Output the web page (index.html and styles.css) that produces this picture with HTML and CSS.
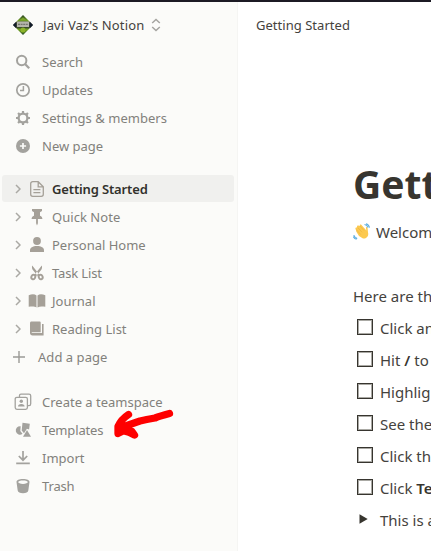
FILE: index.html
```html
<!DOCTYPE html>
<html lang="en">
<head>
<meta charset="utf-8">
<title>Getting Started</title>
<link rel="stylesheet" href="styles.css">
</head>
<body>
<div class="app">
  <aside class="sidebar">
    <div class="row switcher">
      <svg class="logo" width="20" height="20" viewBox="0 0 20 20"><defs><linearGradient id="g" x1="0" y1="0" x2="0" y2="1"><stop offset="0" stop-color="#263f23"/><stop offset=".28" stop-color="#719f23"/><stop offset=".4" stop-color="#393b35"/><stop offset=".6" stop-color="#303931"/><stop offset=".73" stop-color="#75a61d"/><stop offset="1" stop-color="#24482a"/></linearGradient></defs><path d="M10 0 20 10 10 20 0 10Z" fill="url(#g)"/><path d="M0 10 3 7v6ZM20 10l-3-3v6Z" fill="#111b29"/><path d="M4 6.500h12v5.500H4Z" fill="#b4b5aa"/><path d="M5 9.300h10" stroke="#66685f" stroke-width="1" stroke-dasharray="2 .6"/><circle cx="10" cy="15" r="2.500" fill="#8db42a"/><path d="m7 5 3-2.500L13 5Z" fill="#7da52c"/></svg>
      <span class="label name">Javi Vaz's Notion</span>
      <svg class="updown" width="10" height="14" viewBox="0 0 10 14"><path d="M1.200 5 5 1.500 8.800 5M1.200 9 5 12.500 8.800 9"/></svg>
    </div>
    <nav class="group tools">
      <div class="row"><svg class="icon" viewBox="0 0 16 16"><circle cx="6.700" cy="6.500" r="4.700" fill="none" stroke="currentColor" stroke-width="2"/><path d="m10 10 4.200 4.200" stroke="currentColor" stroke-width="2.300"/></svg><span class="label">Search</span></div>
      <div class="row"><svg class="icon" viewBox="0 0 16 16"><circle cx="8" cy="8" r="6.200" fill="none" stroke="currentColor" stroke-width="1.700"/><path d="M8.400 4v4.600H5" fill="none" stroke="currentColor" stroke-width="1.500"/></svg><span class="label">Updates</span></div>
      <div class="row"><svg class="icon" viewBox="0 0 16 16"><circle cx="8" cy="8" r="4.400" fill="none" stroke="currentColor" stroke-width="2.300"/><path d="M8 1v2.500M8 12.500V15M1 8h2.500M12.500 8H15M3.050 3.050 4.900 4.900M11.100 11.100l1.850 1.850M3.050 12.950 4.900 11.100M11.100 4.900l1.850-1.850" stroke="currentColor" stroke-width="2.200"/></svg><span class="label wide">Settings &amp; members</span></div>
      <div class="row"><svg class="icon" viewBox="0 0 16 16"><circle cx="8" cy="8" r="7" fill="currentColor"/><path d="M8 4.900v6.200M4.900 8h6.200" stroke="#fbfbf9" stroke-width="1.700"/></svg><span class="label">New page</span></div>
    </nav>
    <nav class="group pages">
      <div class="row active"><svg class="chev" viewBox="0 0 6 10"><path d="m1 1 4 4-4 4"/></svg><svg class="picon" viewBox="0 0 16 18"><path d="M9.200 1.700H3.700a2 2 0 0 0-2 2v10.600a2 2 0 0 0 2 2h8.600a2 2 0 0 0 2-2V6.700ZM9.200 1.900v4.900h4.900M4.400 9.700h7M4.400 12.600h7" fill="none" stroke="currentColor" stroke-width="1.300"/></svg><span class="label">Getting Started</span></div>
      <div class="row"><svg class="chev" viewBox="0 0 6 10"><path d="m1 1 4 4-4 4"/></svg><svg class="picon" viewBox="0 0 16 18"><path d="M3 1h10v2l-2 1.200v3.600c1.600.6 2.400 1.700 2.400 3.200H8.900v4.200L8 17.500l-.9-2.300V11H2.600c0-1.500.8-2.600 2.400-3.200V4.200L3 3Z" fill="currentColor"/></svg><span class="label wide">Quick Note</span></div>
      <div class="row"><svg class="chev" viewBox="0 0 6 10"><path d="m1 1 4 4-4 4"/></svg><svg class="picon" viewBox="0 0 16 18"><circle cx="8" cy="5" r="3.900" fill="currentColor"/><path d="M1 16v-1.700C1 11.600 3.700 10 8 10s7 1.600 7 4.300V16Z" fill="currentColor"/></svg><span class="label">Personal Home</span></div>
      <div class="row"><svg class="chev" viewBox="0 0 6 10"><path d="m1 1 4 4-4 4"/></svg><svg class="picon" viewBox="0 0 16 18"><path d="m3.200 1.500 7.700 9.800-1.700 1.200-4.900-5.900C3.100 5.100 2.600 3.300 3.200 1.500ZM12.800 1.500 5.100 11.300l1.700 1.200 4.900-5.900c1.200-1.500 1.700-3.300 1.100-5.100Z" fill="currentColor"/><g fill="none" stroke="currentColor" stroke-width="1.900"><ellipse cx="4.300" cy="13" rx="1.900" ry="2.300" transform="rotate(25 4.300 13)"/><ellipse cx="11.700" cy="13" rx="1.900" ry="2.300" transform="rotate(-25 11.700 13)"/></g></svg><span class="label tight">Task List</span></div>
      <div class="row"><svg class="chev" viewBox="0 0 6 10"><path d="m1 1 4 4-4 4"/></svg><svg class="picon" viewBox="0 0 16 18"><path d="M-.3 3.200C3 2 5.500 2 7.500 3.400V15.500c-2-1.300-4.500-1.300-7.800-.7ZM16.300 3.200C13 2 10.500 2 8.500 3.400V15.500c2-1.300 4.500-1.300 7.800-.7Z" fill="currentColor"/></svg><span class="label">Journal</span></div>
      <div class="row"><svg class="chev" viewBox="0 0 6 10"><path d="m1 1 4 4-4 4"/></svg><svg class="picon" viewBox="0 0 16 18"><path d="M2.500 1.500h8.200a1 1 0 0 1 1 1v9.800H3.300c-1 0-1 .8 0 .8H13V4h1.600v11.500H3.500C2 15.500 1 14.600 1 13V3c0-.9.600-1.500 1.500-1.500Z" fill="currentColor"/></svg><span class="label">Reading List</span></div>
      <div class="row add"><svg class="plus" viewBox="0 0 12 12"><path d="M6 0v12M0 6h12"/></svg><span class="label wide">Add a page</span></div>
    </nav>
    <nav class="group extras">
      <div class="row"><svg class="icon" viewBox="0 0 16 16"><g fill="none" stroke="currentColor" stroke-width="1.300"><path d="M4.500 3V1.600Q4.500.2 6 .2h8Q15.700.2 15.700 1.800v8Q15.700 11.700 14 11.700h-1.500"/><rect x=".2" y="3.300" width="12.200" height="12" rx="1.700"/></g><circle cx="6.300" cy="7.300" r="1.700" fill="currentColor"/><path d="M3 12.500q0-2.500 3.300-2.500t3.300 2.500Z" fill="currentColor"/></svg><span class="label">Create a teamspace</span></div>
      <div class="row templates"><svg class="icon" viewBox="0 0 16 16"><path d="m7.500.8 7.300 1-.7 5.700-2.200-.8L9 11.200 6.700 8.500Z" fill="currentColor"/><path d="M5.700 4.300a4.200 4.200 0 1 0 1.800 7.500L5.300 9Z" fill="currentColor"/><path d="m12 8 4 6.800H8Z" fill="currentColor"/></svg><span class="label tight">Templates</span>
        <svg class="arrow" width="62" height="36" viewBox="0 0 62 36"><path d="M56.500 5.500Q47 8 42 10Q33 11.500 27 13Q18 16 7 20M15.500 6.500Q8 11.500 5 18.500L5 25.500Q12 21 19 23.500L21.500 27Q16 24 11 23L7 20" fill="none" stroke="#fe0000" stroke-width="7.300" stroke-linecap="round" stroke-linejoin="round"/></svg></div>
      <div class="row"><svg class="icon" viewBox="0 0 16 16"><path d="M8 1v8M3.800 6 8 10.200 12.200 6M1.200 13.300h13.600" fill="none" stroke="currentColor" stroke-width="1.700"/></svg><span class="label">Import</span></div>
      <div class="row"><svg class="icon" viewBox="0 0 16 16"><path fill-rule="evenodd" d="M8 1c4 0 6.500 1.200 6.500 3l-1.200 8.500C13 14.500 11 15.200 8 15.200s-5-.7-5.300-2.700L1.500 4C1.500 2.200 4 1 8 1Zm0 1.500c-2.800 0-4.800.7-4.800 1.500S5.200 6 8 6s4.800-1.200 4.800-2S10.800 2.500 8 2.500Z" fill="currentColor"/></svg><span class="label tight">Trash</span></div>
    </nav>
  </aside>
  <main class="main">
    <header class="crumb">Getting Started</header>
    <article class="doc">
      <h1>Getting</h1>
      <p class="welcome"><svg class="wave" width="18" height="18" viewBox="0 0 18 18"><path d="M3.200 8.500 6 13 10 15.500c4 .5 6-3 5-6L14.500 4.500c-.8-1-1.900-.2-1.500 1l.4 2.100L8.500 2C7.500 1 6.200 2 7 3L5.300 2.500C4 2.200 3.500 3.400 4.500 4.300L3.200 4.500c-1 .3-1 1.500-.3 2Z" fill="#fcc94f"/><path d="m7 3 4 4.500M4.500 4.300l4.600 5M3.200 6.500l4.500 5" stroke="#e9ae40" stroke-width=".6" fill="none"/><path d="M11.500 1.500q2.500.4 3.500 3M13 .7q2.800.8 3.500 4M.8 12q.5 2.500 3.400 3.500M.3 13.500q1 2.300 3.300 2.800" stroke="#5daee0" stroke-width="1.100" fill="none"/></svg><span>Welcome</span></p>
      <p class="intro">Here are the</p>
      <ul class="todos">
        <li><i class="box"></i><span>Click anywhere</span></li>
        <li><i class="box"></i><span>Hit <b>/</b> to</span></li>
        <li><i class="box"></i><span>Highlight</span></li>
        <li><i class="box"></i><span>See the</span></li>
        <li><i class="box"></i><span>Click the</span></li>
        <li><i class="box"></i><span>Click <b>Templates</b></span></li>
        <li><svg class="toggle" viewBox="0 0 9 10"><path d="M.5.3 8.700 5 .5 9.700Z"/></svg><span>This is a</span></li>
      </ul>
    </article>
  </main>
</div>
</body>
</html>
```
FILE: styles.css
```css
* { box-sizing: border-box; }
body {
  margin: 0;
  overflow: hidden;
  font-family: "Noto Sans", "Open Sans", sans-serif;
  color: #37352f;
  background: #fff;
}
.app {
  display: flex;
  width: 431px;
  height: 551px;
  border-top: 2px solid #1c1a24;
  overflow: hidden;
}
.sidebar {
  flex: 0 0 238px;
  background: #fbfbf9;
  border-right: 1px solid #f5f5f3;
  font-size: 13px;
  color: #82817c;
  padding-top: 9px;
}
.row {
  display: flex;
  align-items: center;
  height: 28px;
  padding-left: 15px;
  white-space: nowrap;
}
.label { line-height: 20px; }
.wide { letter-spacing: 0.04px; }
.tight { letter-spacing: -0.15px; }
.switcher { padding-left: 13px; color: #44423d; }
.name { letter-spacing: 0.14px; }
.logo { margin-right: 10px; }
.updown { margin-left: 7px; fill: none; stroke: #a5a4a0; stroke-width: 1.5; }
.tools { margin-top: 9px; }
.pages { margin-top: 15px; }
.extras { margin-top: 17px; }
.icon { flex: none; width: 16px; height: 16px; margin-right: 11px; color: #a3a29e; overflow: visible; }
.chev { flex: none; width: 6px; height: 10px; margin-right: 8px; fill: none; stroke: #aaa9a4; stroke-width: 1.5; }
.picon { flex: none; width: 16px; height: 18px; margin-right: 7px; color: #a5a098; overflow: visible; }
.active {
  height: 27px;
  margin: 0 3px 1px 2px;
  padding-left: 13px;
  border-radius: 3px;
  background: #f0f0ee;
  color: #32302c;
  font-weight: 600;
  letter-spacing: -0.14px;
}
.add { padding-left: 13px; }
.plus { width: 12px; height: 12px; margin-right: 13px; stroke: #9b9a96; stroke-width: 1.4; }
.templates { position: relative; }
.arrow { position: absolute; left: 113px; top: -8px; }
.main { flex: 1; min-width: 0; overflow: hidden; white-space: nowrap; }
.crumb { height: 46px; padding-left: 18px; font-size: 13px; line-height: 46px; color: #44423d; letter-spacing: 0.03px; }
.doc { padding: 110px 0 0 115px; font-size: 15px; color: #44423d; }
h1 { margin: 0; font-size: 39px; line-height: 52px; font-weight: 700; color: #37352f; }
p { margin: 0; line-height: 32px; }
.welcome { display: flex; align-items: center; margin-top: 6px; }
.wave { flex: none; margin-right: 5px; }
.intro { margin-top: 32px; }
.todos { list-style: none; margin: 0; padding: 0; }
.todos li { display: flex; align-items: center; height: 32px; padding-left: 4px; }
.box { flex: none; width: 16px; height: 16px; border: 1.5px solid #37352f; outline: 0.5px solid #aaa9a4; outline-offset: -2px; margin: 0 7px 2px 0; }
.todos b { font-weight: 600; color: #37352f; }
.toggle { flex: none; width: 9px; height: 10px; margin: 0 12px 2px 2px; fill: #37352f; }
```
